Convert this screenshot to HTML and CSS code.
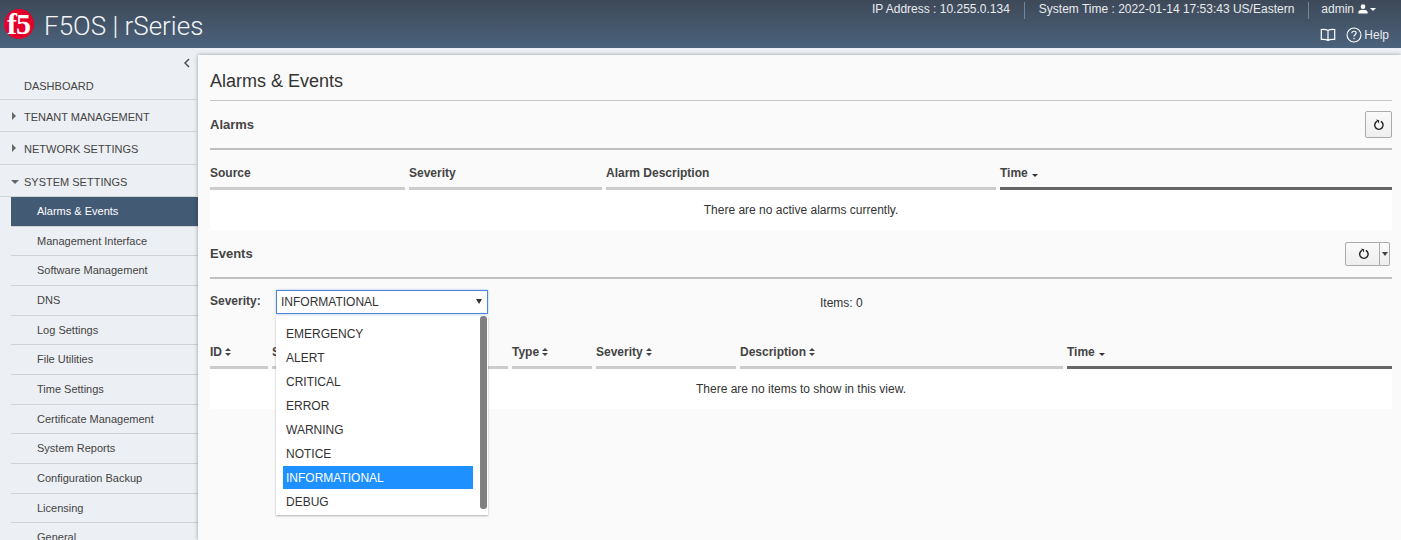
FILE: index.html
```html
<!DOCTYPE html>
<html lang="en">
<head>
    <meta charset="UTF-8">
    <meta name="viewport" content="width=device-width, initial-scale=1.0">
    <title>Alarms &amp; Events</title>
    <link rel="stylesheet" href="styles.css">
</head>
<body>
    <header class="topbar">
        <div class="brand">
            <svg class="logo" viewBox="0 0 32 32" width="32" height="32">
                <circle cx="16" cy="16" r="15" fill="#e4002b"/>
                <text x="15.5" y="26" text-anchor="middle" class="logo-text">f5</text>
            </svg>
            <span class="brand-name">F5OS | rSeries</span>
        </div>
        <div class="topbar-right">
            <div class="status-row">
                <span class="status-item">IP Address : 10.255.0.134</span>
                <span class="status-item status-sep">System Time : 2022-01-14 17:53:43 US/Eastern</span>
                <span class="status-item status-sep status-user">admin
                    <svg viewBox="0 0 12 12" width="10" height="10"><circle cx="6" cy="3.2" r="2.8" fill="#fff"/><path d="M0.500 11.500V9.500C0.500 7.800 3 7 6 7s5.500 .8 5.500 2.500V11.500z" fill="#fff"/></svg>
                    <i class="caret-white"></i>
                </span>
            </div>
            <div class="help-row">
                <svg viewBox="0 0 16 14" width="16" height="14" fill="none" stroke="#fff" stroke-width="1.2"><path d="M8 2.500C6.500 1.500 3.500 1.300 1.300 1.500v10c2.200-.2 5.200 0 6.700 1 1.500-1 4.500-1.200 6.700-1v-10C12.500 1.300 9.500 1.500 8 2.500zM8 2.500v10"/></svg>
                <svg class="help-icon" viewBox="0 0 16 16" width="16" height="16" fill="none" stroke="#fff" stroke-width="1.1"><circle cx="8" cy="8" r="7"/><path d="M5.800 6.200C5.800 4.900 6.800 4.200 8 4.200s2.200.7 2.200 1.900c0 1.700-2.200 1.700-2.200 3.400"/><path d="M8 10.800v1.400"/></svg>
                <span>Help</span>
            </div>
        </div>
    </header>

    <div class="layout">
        <nav class="sidebar">
            <div class="collapse-row">
                <svg viewBox="0 0 8 10" width="8" height="10" fill="none" stroke="#444" stroke-width="1.4"><path d="M6 1L2 5l4 4"/></svg>
            </div>
            <div class="nav-item nav-first">DASHBOARD</div>
            <div class="nav-item"><i class="arrow-right"></i>TENANT MANAGEMENT</div>
            <div class="nav-item"><i class="arrow-right"></i>NETWORK SETTINGS</div>
            <div class="nav-item nav-open"><i class="arrow-down"></i>SYSTEM SETTINGS</div>
            <ul class="subnav">
                <li class="active">Alarms &amp; Events</li>
                <li>Management Interface</li>
                <li>Software Management</li>
                <li>DNS</li>
                <li>Log Settings</li>
                <li>File Utilities</li>
                <li>Time Settings</li>
                <li>Certificate Management</li>
                <li>System Reports</li>
                <li>Configuration Backup</li>
                <li>Licensing</li>
                <li>General</li>
            </ul>
        </nav>

        <main class="content">
            <h1 class="page-title">Alarms &amp; Events</h1>

            <div class="section-head">
                <h2>Alarms</h2>
                <button class="btn-refresh" type="button">
                    <svg class="refresh" viewBox="0 0 12 12" width="12" height="12"><path d="M7.800 2.400A4.200 4.200 0 1 1 4 2.400" fill="none" stroke="#222" stroke-width="1.4"/><path d="M3 .6l3.200 .6-.2 3.400z" fill="#222"/></svg>
                </button>
            </div>
            <div class="table-head alarms-cols">
                <div class="th">Source</div>
                <div class="th">Severity</div>
                <div class="th">Alarm Description</div>
                <div class="th th-sorted">Time <i class="caret-sort"></i></div>
            </div>
            <div class="empty">There are no active alarms currently.</div>

            <div class="section-head">
                <h2>Events</h2>
                <div class="btn-split">
                    <button class="btn-main" type="button">
                        <svg class="refresh" viewBox="0 0 12 12" width="12" height="12"><path d="M7.800 2.400A4.200 4.200 0 1 1 4 2.400" fill="none" stroke="#222" stroke-width="1.4"/><path d="M3 .6l3.200 .6-.2 3.400z" fill="#222"/></svg>
                    </button>
                    <button class="btn-drop" type="button"><i class="caret-dark"></i></button>
                </div>
            </div>

            <div class="filter-row">
                <label class="filter-label">Severity:</label>
                <div class="select-wrap">
                    <div class="select-box">INFORMATIONAL<i class="caret-select"></i></div>
                    <div class="select-menu">
                        <ul>
                            <li>EMERGENCY</li>
                            <li>ALERT</li>
                            <li>CRITICAL</li>
                            <li>ERROR</li>
                            <li>WARNING</li>
                            <li>NOTICE</li>
                            <li class="selected">INFORMATIONAL</li>
                            <li>DEBUG</li>
                        </ul>
                        <div class="menu-scroll"></div>
                    </div>
                </div>
                <div class="items-count">Items: 0</div>
            </div>

            <div class="table-head events-cols">
                <div class="th">ID <i class="sort-both"></i></div>
                <div class="th">Source <i class="sort-both"></i></div>
                <div class="th">Type <i class="sort-both"></i></div>
                <div class="th">Severity <i class="sort-both"></i></div>
                <div class="th">Description <i class="sort-both"></i></div>
                <div class="th th-sorted">Time <i class="caret-sort"></i></div>
            </div>
            <div class="empty">There are no items to show in this view.</div>
        </main>
    </div>
</body>
</html>
```

FILE: styles.css
```css
* {
    box-sizing: border-box;
}

html,
body {
    height: 540px;
    overflow: hidden;
}

body {
    margin: 0;
    background-color: #eceff3;
    color: #333;
    font-family: "Liberation Sans", Arial, sans-serif;
    font-size: 12px;
}

/* header */
.topbar {
    height: 48px;
    display: flex;
    justify-content: space-between;
    background: linear-gradient(to bottom, #3e4958, #4a627c);
    color: #fff;
}

.brand {
    display: flex;
    align-items: center;
    padding: 8px 0 6px 3px;
}

.logo {
    margin-top: -2px;
}

.logo-text {
    font-family: "Liberation Serif", serif;
    font-weight: bold;
    font-size: 30px;
    letter-spacing: -1px;
    fill: #fff;
}

.brand-name {
    margin-left: 9px;
    margin-top: 2px;
    font-family: Roboto, sans-serif;
    font-weight: 300;
    font-size: 26px;
    color: #f2f4f6;
}

.topbar-right {
    display: flex;
    flex-direction: column;
    align-items: flex-end;
    padding-top: 2px;
    padding-right: 24px;
}

.status-row {
    display: flex;
    height: 17px;
    color: #e8ebee;
}

.status-item {
    line-height: 14px;
}

.status-sep {
    margin-left: 14px;
    padding-left: 14px;
    border-left: 1px solid #71859b;
}

.status-user {
    margin-right: 1px;
    display: flex;
    align-items: center;
    gap: 4px;
    height: 17px;
    padding-left: 12px;
    padding-bottom: 3px;
}

.caret-white {
    margin-left: -2px;
    border-top: 3px solid #fff;
    border-left: 3px solid transparent;
    border-right: 3px solid transparent;
}

.help-row {
    display: flex;
    align-items: center;
    margin-top: 7px;
    margin-right: -12px;
    height: 18px;
    color: #e8ebee;
}

.help-icon {
    margin-left: 10px;
    margin-right: 2px;
}

/* layout */
.layout {
    display: flex;
    height: 492px;
}

.sidebar {
    width: 198px;
    flex-shrink: 0;
    color: #444;
}

.collapse-row {
    height: 24px;
    padding: 10px 7px 0 0;
    text-align: right;
    line-height: 10px;
}

.nav-item {
    height: 32.5px;
    padding-left: 24px;
    line-height: 35px;
    font-size: 11px;
    border-bottom: 1px solid #ced3d8;
    position: relative;
}

.nav-first {
    height: 27.5px;
    line-height: 28px;
}

.arrow-right {
    position: absolute;
    left: 12px;
    top: 12px;
    border-left: 4px solid #666;
    border-top: 4px solid transparent;
    border-bottom: 4px solid transparent;
}

.arrow-down {
    position: absolute;
    left: 11px;
    top: 15px;
    border-top: 4px solid #666;
    border-left: 4px solid transparent;
    border-right: 4px solid transparent;
}

.subnav {
    list-style: none;
    margin: 0 0 0 11px;
    padding: 0;
}

.subnav li {
    height: 29.68px;
    padding-left: 26px;
    line-height: 29px;
    font-size: 11px;
    border-bottom: 1px solid #ced3d8;
}

.subnav .active {
    background-color: #435a75;
    color: #fff;
}

/* content */
.content {
    flex: 1;
    min-width: 0;
    margin-top: 7px;
    padding: 0 9px 0 12px;
    background-color: #fafafa;
    box-shadow: 0 0 4px rgba(0, 0, 0, 0.35);
}

.page-title {
    margin: 0;
    height: 46px;
    padding-top: 14px;
    font-size: 18px;
    font-weight: 400;
    line-height: 24px;
    border-bottom: 1px solid #c4c4c4;
    color: #333;
}

.section-head {
    display: flex;
    justify-content: space-between;
    align-items: center;
    height: 49px;
    border-bottom: 2px solid #bfbfbf;
}

.section-head h2 {
    margin: 0;
    font-size: 13px;
    font-weight: bold;
    color: #444;
}

.btn-refresh {
    width: 27px;
    height: 27px;
    padding: 0;
    border: 1px solid #aaa;
    border-radius: 2px;
    background: linear-gradient(to bottom, #fafafa, #eee);
}

.refresh {
    display: block;
    margin: 0 auto;
}

.btn-split {
    display: flex;
    height: 24px;
}

.btn-main {
    width: 35px;
    height: 24px;
    padding: 0 0 0 3px;
    border: 1px solid #aaa;
    border-radius: 2px 0 0 2px;
    background: linear-gradient(to bottom, #fafafa, #eee);
}

.btn-drop {
    width: 10px;
    height: 24px;
    padding: 0;
    border: 1px solid #aaa;
    border-left: 0;
    border-radius: 0 2px 2px 0;
    background: linear-gradient(to bottom, #fafafa, #eee);
    margin-right: 2px;
}

.caret-dark {
    display: block;
    margin: 0 auto;
    width: 0;
    border-top: 4px solid #444;
    border-left: 3px solid transparent;
    border-right: 3px solid transparent;
}

.table-head {
    display: grid;
    column-gap: 4px;
}

.alarms-cols {
    grid-template-columns: 195px 193px 390px 1fr;
}

.events-cols {
    grid-template-columns: 58px 236px 80px 140px 323px 1fr;
}

.th {
    height: 40px;
    padding-top: 15px;
    font-weight: bold;
    color: #444;
    line-height: 16px;
    border-bottom: 3px solid #ccc;
    white-space: nowrap;
}

.th-sorted {
    border-bottom-color: #666;
}

.caret-sort {
    display: inline-block;
    margin-left: 1px;
    border-top: 3px solid #333;
    border-left: 3px solid transparent;
    border-right: 3px solid transparent;
}

.sort-both {
    display: inline-block;
    position: relative;
    width: 7px;
    height: 8px;
}

.sort-both::before,
.sort-both::after {
    content: "";
    position: absolute;
    left: 0;
    border-left: 3.5px solid transparent;
    border-right: 3.5px solid transparent;
}

.sort-both::before {
    top: 0;
    border-bottom: 3.5px solid #444;
}

.sort-both::after {
    bottom: 0;
    border-top: 3.5px solid #444;
}

.empty {
    height: 40px;
    line-height: 41px;
    text-align: center;
    background-color: #fff;
}

.filter-row {
    display: flex;
    align-items: flex-start;
    height: 50px;
    padding-top: 11px;
}

.filter-label {
    width: 66px;
    line-height: 23px;
    font-weight: bold;
    color: #444;
}

.select-wrap {
    position: relative;
    width: 212px;
}

.select-box {
    position: relative;
    height: 24px;
    padding-left: 4px;
    line-height: 22px;
    background-color: #fff;
    border: 1px solid #4a86d8;
    box-shadow: 0 0 2px rgba(74, 134, 216, 0.5);
}

.caret-select {
    position: absolute;
    right: 5px;
    top: 8px;
    border-top: 5px solid #333;
    border-left: 3px solid transparent;
    border-right: 3px solid transparent;
}

.select-menu {
    position: absolute;
    z-index: 5;
    left: 0;
    top: 26px;
    width: 212px;
    height: 199px;
    padding: 7px 0 0 7px;
    background-color: #fff;
    box-shadow: 0 1px 2px rgba(0, 0, 0, 0.3);
}

.select-menu ul {
    list-style: none;
    margin: 0;
    padding: 0;
    width: 190px;
}

.select-menu li {
    height: 24px;
    padding-left: 3px;
    line-height: 23px;
}

.select-menu .selected {
    height: 23px;
    margin-top: -1px;
    margin-bottom: 2px;
    line-height: 24px;
    background-color: #1e90ff;
    color: #fff;
}

.menu-scroll {
    position: absolute;
    right: 1px;
    top: 0;
    bottom: 6px;
    width: 7px;
    background-color: #808080;
    border-radius: 3px;
}

.items-count {
    margin-left: 332px;
    line-height: 27px;
}
```
